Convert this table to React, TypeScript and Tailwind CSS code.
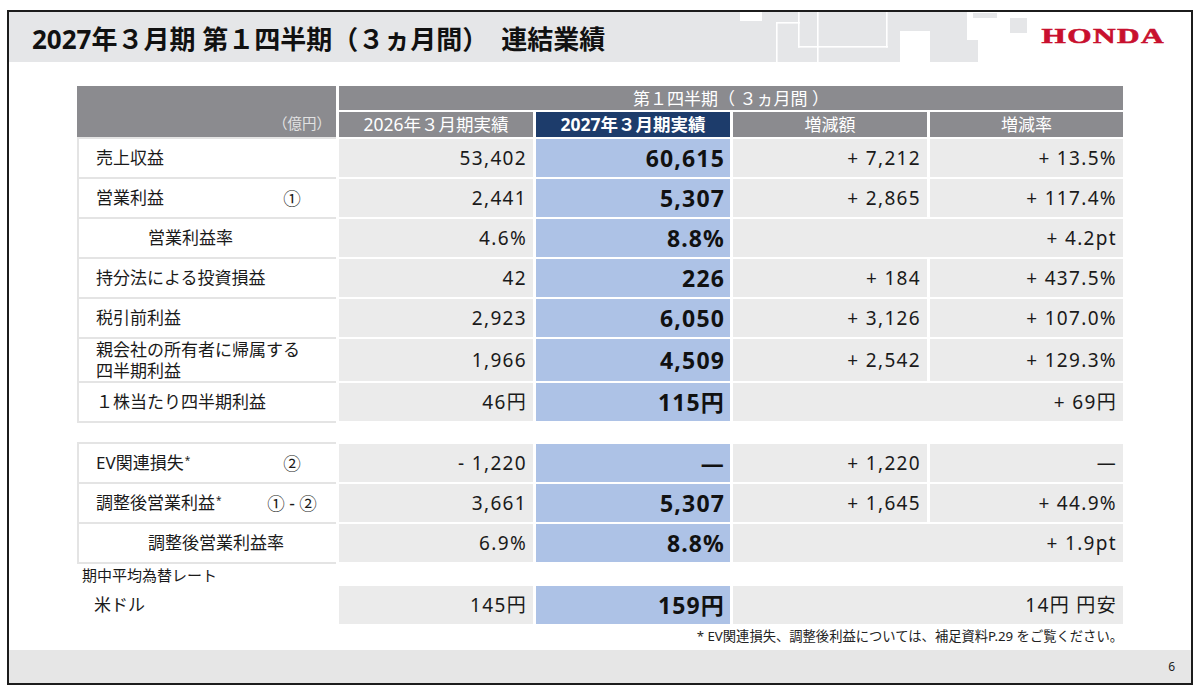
import type { ReactNode } from "react";

type DataRow = {
  label: ReactNode;
  indent?: boolean;
  mark?: string;
  tall?: boolean;
  a: string;
  b: string;
  c?: string;
  d?: string;
  merged?: string;
};

const topRows: DataRow[] = [
  { label: "売上収益", a: "53,402", b: "60,615", c: "+ 7,212", d: "+ 13.5%" },
  { label: "営業利益", mark: "①", a: "2,441", b: "5,307", c: "+ 2,865", d: "+ 117.4%" },
  { label: "営業利益率", indent: true, a: "4.6%", b: "8.8%", merged: "+ 4.2pt" },
  { label: "持分法による投資損益", a: "42", b: "226", c: "+ 184", d: "+ 437.5%" },
  { label: "税引前利益", a: "2,923", b: "6,050", c: "+ 3,126", d: "+ 107.0%" },
  {
    label: (
      <div className="leading-[21px]">
        <div>親会社の所有者に帰属する</div>
        <div>四半期利益</div>
      </div>
    ),
    tall: true,
    a: "1,966",
    b: "4,509",
    c: "+ 2,542",
    d: "+ 129.3%",
  },
  { label: "１株当たり四半期利益", a: "46円", b: "115円", merged: "+ 69円" },
];

const adjRows: DataRow[] = [
  {
    label: (
      <>
        EV関連損失<sup className="text-[10px] ml-[1px]">*</sup>
      </>
    ),
    mark: "②",
    a: "- 1,220",
    b: "—",
    c: "+ 1,220",
    d: "—",
  },
  {
    label: (
      <>
        調整後営業利益<sup className="text-[10px] ml-[1px]">*</sup>
      </>
    ),
    mark: "① - ②",
    a: "3,661",
    b: "5,307",
    c: "+ 1,645",
    d: "+ 44.9%",
  },
  { label: "調整後営業利益率", indent: true, a: "6.9%", b: "8.8%", merged: "+ 1.9pt" },
];

const grid = "grid grid-cols-[259px_194px_194px_194px_193px] gap-x-[3px]";
const num = "text-[19px] tracking-[0.07em]";
const cell = "flex items-center justify-end pr-[6px] border-t-2 border-white bg-[#ebebeb] text-[#1a1a1a]";
const hiCell =
  "flex items-center justify-end pr-[5px] border-t-2 border-white bg-[#adc2e6] text-[#111] font-bold text-[23px] tracking-[0.05em]";

function Row({ r, plain }: { r: DataRow; plain?: boolean }) {
  return (
    <div className={`${grid} ${r.tall ? "h-[44px]" : "h-[40px]"}`}>
      <div
        className={`grid grid-cols-[1fr_88px] items-center text-[17px] text-[#1a1a1a] ${
          plain ? "border-t-2 border-white" : "border-t-2 border-l-2 border-[#e4e4e4]"
        } ${r.indent ? "pl-[69px]" : "pl-[17px]"}`}
      >
        <div className="whitespace-nowrap">{r.label}</div>
        <div className="text-center text-[17.5px] whitespace-nowrap">{r.mark}</div>
      </div>
      <div className={`${cell} ${num}`}>{r.a}</div>
      <div className={hiCell}>{r.b}</div>
      {r.merged ? (
        <div className={`${cell} ${num} col-span-2`}>{r.merged}</div>
      ) : (
        <>
          <div className={`${cell} ${num}`}>{r.c}</div>
          <div className={`${cell} ${num}`}>{r.d}</div>
        </>
      )}
    </div>
  );
}

function HeaderDecor() {
  return (
    <svg className="absolute left-[691px] top-0" width="491" height="50" viewBox="0 0 491 50">
      <g fill="#ffffff">
        <rect x="40" y="0" width="22" height="9" />
        <rect x="76" y="10" width="1.6" height="40" />
        <rect x="76" y="10" width="24" height="1.6" />
        <rect x="98" y="0" width="1.6" height="35.6" />
        <rect x="98" y="34" width="90" height="1.6" />
        <rect x="117" y="0" width="1.6" height="50" />
        <rect x="186" y="0" width="1.6" height="35.6" />
        <rect x="200" y="19" width="30" height="31" />
        <rect x="267" y="0" width="11" height="28" />
        <rect x="278" y="0" width="213" height="50" />
      </g>
      <g fill="#e5e6e8">
        <rect x="273" y="1" width="24" height="5" />
        <rect x="310" y="6" width="17" height="15" />
      </g>
    </svg>
  );
}

export default function App() {
  return (
    <div
      className="w-[1200px] h-[687px] bg-white pt-[10px] px-[7px] pb-[2px]"
      style={{ fontFamily: '"Noto Sans", "Noto Sans CJK JP", sans-serif' }}
    >
      <div className="h-full border-2 border-[#1c1c1c] flex flex-col">
        <div className="relative h-[50px] bg-[#e5e6e8] flex items-center justify-between">
          <HeaderDecor />
          <h1 className="relative pl-[23px] pt-[4px] text-[26px] font-bold text-[#111] whitespace-nowrap">
            2027年３月期 第１四半期（３ヵ月間）　連結業績
          </h1>
          <span
            className="relative z-10 mr-[26px] mt-[-4px] inline-block origin-right scale-x-[1.42] text-[22px] font-black tracking-[1px] text-[#c8102e]"
            style={{ fontFamily: '"Liberation Serif", serif', WebkitTextStroke: "0.6px #c8102e" }}
          >
            HONDA
          </span>
        </div>

        <div className="flex-1 pl-[68px] pt-[24px]">
          <div className={`${grid} grid-rows-[24px_25px] gap-y-[2px] text-white text-[17px]`}>
            <div className="row-span-2 bg-[#8b8b8f] flex items-end justify-end pr-[5px] pb-[2px] text-[14.5px] text-[#e2e2e2]">
              （億円）
            </div>
            <div className="col-span-4 bg-[#8b8b8f] flex items-center justify-center leading-none">
              第１四半期（ ３ヵ月間 ）
            </div>
            <div className="bg-[#8b8b8f] flex items-center justify-center leading-none text-[17.5px]">
              2026年３月期実績
            </div>
            <div className="bg-[#1d3c6b] flex items-center justify-center leading-none font-bold text-[17.5px]">
              2027年３月期実績
            </div>
            <div className="bg-[#8b8b8f] flex items-center justify-center leading-none">増減額</div>
            <div className="bg-[#8b8b8f] flex items-center justify-center leading-none">増減率</div>
          </div>

          {topRows.map((r, i) => (
            <Row key={i} r={r} />
          ))}
          <div className="w-[259px] h-[2px] bg-[#e4e4e4]" />

          <div className="h-[19px]" />
          {adjRows.map((r, i) => (
            <Row key={i} r={r} />
          ))}
          <div className="w-[259px] h-[2px] bg-[#e4e4e4]" />

          <div className="h-[20px] pl-[5px] pt-[2px] text-[15px] leading-[18px] text-[#1a1a1a]">
            期中平均為替レート
          </div>
          <Row plain r={{ label: "米ドル", a: "145円", b: "159円", merged: "14円 円安" }} />

          <div className="w-[1046px] mt-[3px] text-right text-[13.3px] leading-[18px] text-[#222]">
            * EV関連損失、調整後利益については、補足資料P.29 をご覧ください。
          </div>
        </div>

        <div className="h-[33px] bg-[#e6e6e6] flex items-center justify-end pr-[16px] text-[12px] text-[#222]">
          6
        </div>
      </div>
    </div>
  );
}
